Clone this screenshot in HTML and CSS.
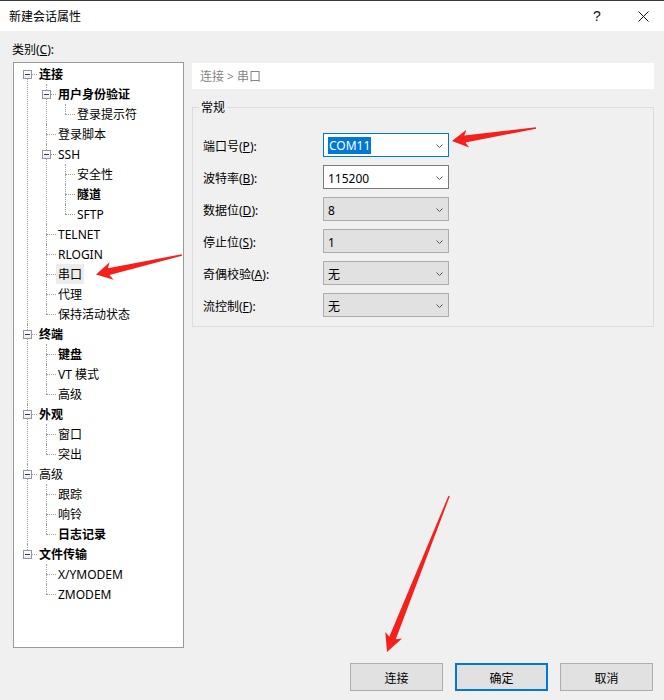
FILE: index.html
```html
<!DOCTYPE html>
<html>
<head>
<meta charset="utf-8">
<title>新建会话属性</title>
<link rel="stylesheet" href="styles.css">
</head>
<body>
<div class="window">
  <div class="titlebar">
    <span class="title">新建会话属性</span>
    <span class="help">?</span>
    <span class="close"><svg width="11" height="11" viewBox="0 0 11 11"><path d="M0.5 0.5L10.5 10.5M10.5 0.5L0.5 10.5" stroke="#111" stroke-width="1" fill="none"/></svg></span>
  </div>
  <div class="main">
    <div class="left">
      <div class="cat-label">类别(<u>C</u>):</div>
      <div class="treebox">
        <ul class="tree">
          <li><div class="row"><span class="exp"></span><span class="lbl b">连接</span></div>
            <ul>
              <li><div class="row"><span class="exp"></span><span class="lbl b">用户身份验证</span></div>
                <ul>
                  <li><div class="row"><span class="lbl leaf">登录提示符</span></div></li>
                </ul>
              </li>
              <li><div class="row"><span class="lbl leaf">登录脚本</span></div></li>
              <li><div class="row"><span class="exp"></span><span class="lbl">SSH</span></div>
                <ul>
                  <li><div class="row"><span class="lbl leaf">安全性</span></div></li>
                  <li><div class="row"><span class="lbl leaf b">隧道</span></div></li>
                  <li><div class="row"><span class="lbl leaf">SFTP</span></div></li>
                </ul>
              </li>
              <li><div class="row"><span class="lbl leaf">TELNET</span></div></li>
              <li><div class="row"><span class="lbl leaf">RLOGIN</span></div></li>
              <li><div class="row"><span class="lbl leaf sel">串口</span></div></li>
              <li><div class="row"><span class="lbl leaf">代理</span></div></li>
              <li><div class="row"><span class="lbl leaf">保持活动状态</span></div></li>
            </ul>
          </li>
          <li><div class="row"><span class="exp"></span><span class="lbl b">终端</span></div>
            <ul>
              <li><div class="row"><span class="lbl leaf b">键盘</span></div></li>
              <li><div class="row"><span class="lbl leaf">VT 模式</span></div></li>
              <li><div class="row"><span class="lbl leaf">高级</span></div></li>
            </ul>
          </li>
          <li><div class="row"><span class="exp"></span><span class="lbl b">外观</span></div>
            <ul>
              <li><div class="row"><span class="lbl leaf">窗口</span></div></li>
              <li><div class="row"><span class="lbl leaf">突出</span></div></li>
            </ul>
          </li>
          <li><div class="row"><span class="exp"></span><span class="lbl">高级</span></div>
            <ul>
              <li><div class="row"><span class="lbl leaf">跟踪</span></div></li>
              <li><div class="row"><span class="lbl leaf">响铃</span></div></li>
              <li><div class="row"><span class="lbl leaf b">日志记录</span></div></li>
            </ul>
          </li>
          <li><div class="row"><span class="exp"></span><span class="lbl b">文件传输</span></div>
            <ul>
              <li><div class="row"><span class="lbl leaf">X/YMODEM</span></div></li>
              <li><div class="row"><span class="lbl leaf">ZMODEM</span></div></li>
            </ul>
          </li>
        </ul>
      </div>
    </div>
    <div class="right">
      <div class="crumb">连接 &gt; 串口</div>
      <fieldset class="group">
        <legend>常规</legend>
        <div class="field"><label>端口号(<u>P</u>):</label>
          <div class="combo edit focus"><span class="val"><span class="hl">COM11</span></span><svg class="chev" width="7" height="4" viewBox="0 0 7 4"><polyline points="0.5,0.5 3.5,3.5 6.5,0.5" fill="none" stroke="#555" stroke-width="1"/></svg></div>
        </div>
        <div class="field"><label>波特率(<u>B</u>):</label>
          <div class="combo edit"><span class="val">115200</span><svg class="chev" width="7" height="4" viewBox="0 0 7 4"><polyline points="0.5,0.5 3.5,3.5 6.5,0.5" fill="none" stroke="#555" stroke-width="1"/></svg></div>
        </div>
        <div class="field"><label>数据位(<u>D</u>):</label>
          <div class="combo list"><span class="val">8</span><svg class="chev" width="7" height="4" viewBox="0 0 7 4"><polyline points="0.5,0.5 3.5,3.5 6.5,0.5" fill="none" stroke="#555" stroke-width="1"/></svg></div>
        </div>
        <div class="field"><label>停止位(<u>S</u>):</label>
          <div class="combo list"><span class="val">1</span><svg class="chev" width="7" height="4" viewBox="0 0 7 4"><polyline points="0.5,0.5 3.5,3.5 6.5,0.5" fill="none" stroke="#555" stroke-width="1"/></svg></div>
        </div>
        <div class="field"><label>奇偶校验(<u>A</u>):</label>
          <div class="combo list"><span class="val">无</span><svg class="chev" width="7" height="4" viewBox="0 0 7 4"><polyline points="0.5,0.5 3.5,3.5 6.5,0.5" fill="none" stroke="#555" stroke-width="1"/></svg></div>
        </div>
        <div class="field"><label>流控制(<u>F</u>):</label>
          <div class="combo list"><span class="val">无</span><svg class="chev" width="7" height="4" viewBox="0 0 7 4"><polyline points="0.5,0.5 3.5,3.5 6.5,0.5" fill="none" stroke="#555" stroke-width="1"/></svg></div>
        </div>
      </fieldset>
    </div>
  </div>
  <div class="footer">
    <button class="btn">连接</button>
    <button class="btn default">确定</button>
    <button class="btn">取消</button>
  </div>
  <svg class="annot" width="664" height="700" viewBox="0 0 664 700">
    <g fill="#f5201b">
      <polygon transform="translate(452,141) rotate(-8.8)" points="0,0 16,-9 13,-3.5 85,-0.7 85,0.7 13,3.5 16,9"/>
      <polygon transform="translate(96,274.5) rotate(-12.8)" points="0,0 16,-9 13,-3.5 88,-0.7 88,0.7 13,3.5 16,9"/>
      <polygon transform="translate(387,652) rotate(-68.3)" points="0,0 18,-9 15,-3.5 168,-0.7 168,0.7 15,3.5 18,9"/>
    </g>
  </svg>
</div>
</body>
</html>
```

FILE: styles.css
```css
* { box-sizing: border-box; }
html, body { margin: 0; padding: 0; }
body {
  font-family: "Noto Sans", "Noto Sans CJK SC", sans-serif;
  font-size: 12px;
  color: #000;
  background: #f0f0f0;
}
.window {
  position: relative;
  width: 664px;
  height: 700px;
  background: #f0f0f0;
  overflow: hidden;
}
.titlebar {
  display: flex;
  align-items: center;
  height: 31px;
  background: #fff;
  border-top: 1px solid #3a3a3a;
  padding-left: 9px;
}
.title { flex: 1; font-size: 12px; line-height: 16px; padding-top: 1px; }
.help {
  width: 42px;
  text-align: center;
  font-size: 14px;
  line-height: 16px;
  font-family: "Liberation Sans", sans-serif;
  color: #111;
  margin-right: 4px;
}
.close {
  width: 42px;
  display: flex;
  justify-content: center;
  align-items: center;
}
.main {
  display: flex;
  gap: 8px;
  padding-left: 12px;
}
.left { width: 172px; }
.cat-label {
  margin-top: 10px;
  padding-top: 1px;
  line-height: 16px;
  height: 16px;
}
.treebox {
  margin-top: 5px;
  margin-left: 1px;
  width: 171px;
  height: 586px;
  background: #fff;
  border: 1px solid #9a9a9a;
  padding-top: 1px;
}
.tree, .tree ul {
  list-style: none;
  margin: 0;
  padding: 0;
}
.tree ul { padding-left: 19px; }
.tree li { position: relative; }
.tree li::before {
  content: "";
  position: absolute;
  left: 13px;
  top: 0;
  bottom: 0;
  border-left: 1px dotted #a0a0a0;
}
.tree > li:first-child::before { top: 10px; }
.tree li:last-child::before { bottom: auto; height: 10px; }
.tree li::after {
  content: "";
  position: absolute;
  left: 13px;
  top: 10px;
  width: 10px;
  border-top: 1px dotted #a0a0a0;
}
.row {
  display: flex;
  align-items: center;
  height: 20px;
  white-space: nowrap;
}
.exp {
  position: relative;
  z-index: 1;
  margin-left: 9px;
  width: 9px;
  height: 9px;
  border: 1px solid #969696;
  background: linear-gradient(#1e3f7c, #1e3f7c) center / 5px 1px no-repeat, linear-gradient(#ffffff, #e8ecf2);
}
.lbl {
  position: relative;
  z-index: 1;
  margin-left: 5px;
  padding: 1px 2px 0 2px;
  height: 20px;
  line-height: 20px;
}
.lbl.leaf { margin-left: 23px; }
.b { font-weight: bold; }
.sel { background: #ececec; }

.right {
  width: 462px;
  margin-top: 32px;
}
.crumb {
  height: 26px;
  line-height: 25px;
  padding-top: 1px;
  background: #fff;
  padding-left: 8px;
  color: #858585;
}
.group {
  margin: 10px 0 0 0;
  padding: 18px 10px 9px 10px;
  border: 1px solid #dcdcdc;
  min-inline-size: 0;
}
.group legend {
  padding: 1px 2px 0 2px;
  margin-left: -4px;
  line-height: 15px;
  height: 16px;
  font-size: 12px;
}
.field {
  display: flex;
  align-items: center;
  height: 24px;
}
.field + .field { margin-top: 8px; }
.field label {
  width: 120px;
  padding-top: 4px;
  line-height: 16px;
}
.combo {
  display: flex;
  align-items: flex-start;
  width: 126px;
  height: 24px;
  border: 1px solid #7a7a7a;
  padding: 3px 0 0 4px;
  line-height: 17px;
}
.combo.edit { background: #fff; }
.combo.focus { border-color: #0078d7; }
.combo.list { background: #e1e1e1; border-color: #adadad; }
.val { line-height: 17px; height: 17px; padding-top: 1px; }
.combo.focus .val { padding-top: 0; }
.hl {
  display: inline-block;
  background: #0078d7;
  color: #fff;
  padding: 1px 1px 0 1px;
  line-height: 16px;
  height: 17px;
}
.chev { margin-left: auto; margin-right: 5px; align-self: center; margin-top: -2px; }

.footer {
  display: flex;
  justify-content: flex-end;
  gap: 12px;
  margin-top: 15px;
  padding-right: 11px;
}
.btn {
  width: 93px;
  height: 28px;
  background: #e1e1e1;
  border: 1px solid #adadad;
  font-family: "Noto Sans", "Noto Sans CJK SC", sans-serif;
  font-size: 12px;
  color: #000;
  padding: 2px 0 0 0;
  margin: 0;
}
.btn.default { border: 2px solid #0078d7; }
.annot {
  position: absolute;
  left: 0;
  top: 0;
  pointer-events: none;
}
```
